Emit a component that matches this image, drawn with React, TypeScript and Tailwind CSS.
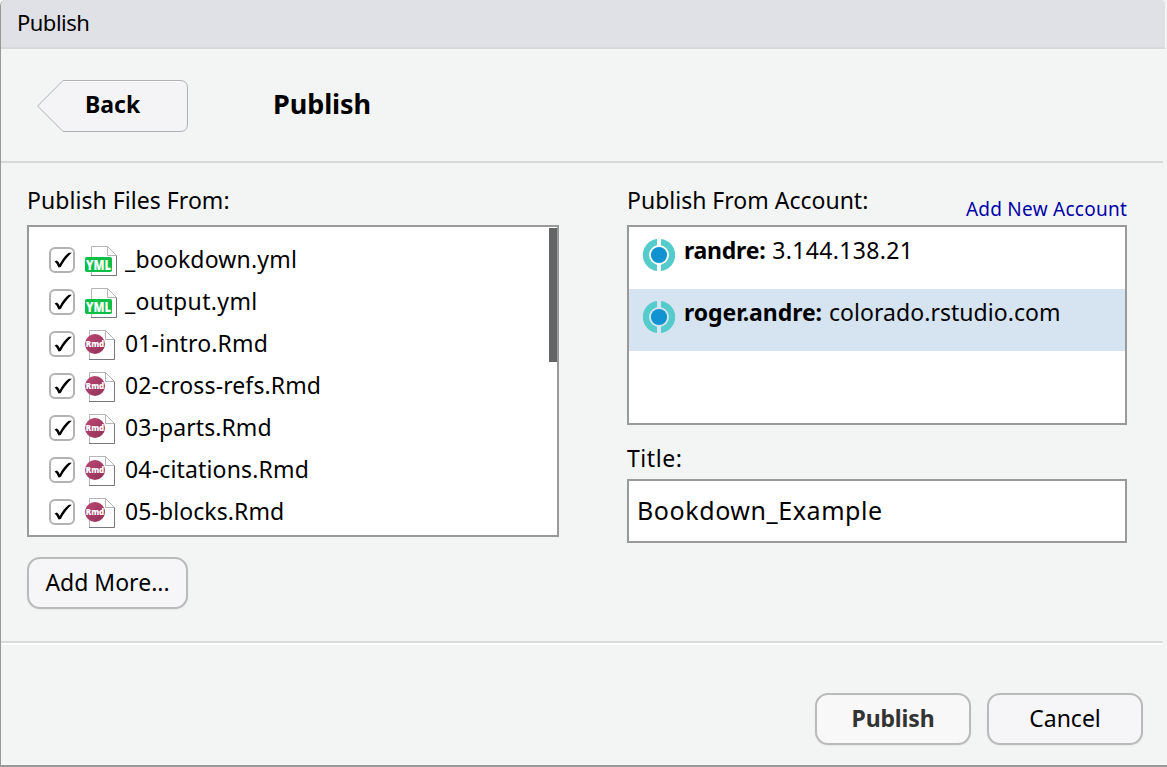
type FileKind = 'yml' | 'rmd';

const files: { name: string; kind: FileKind; tracking: string }[] = [
  { name: '_bookdown.yml', kind: 'yml', tracking: 'tracking-[0.18px]' },
  { name: '_output.yml', kind: 'yml', tracking: 'tracking-[0.36px]' },
  { name: '01-intro.Rmd', kind: 'rmd', tracking: 'tracking-[0.14px]' },
  { name: '02-cross-refs.Rmd', kind: 'rmd', tracking: 'tracking-[0.11px]' },
  { name: '03-parts.Rmd', kind: 'rmd', tracking: 'tracking-[0.08px]' },
  { name: '04-citations.Rmd', kind: 'rmd', tracking: 'tracking-[0.16px]' },
  { name: '05-blocks.Rmd', kind: 'rmd', tracking: 'tracking-[0.08px]' },
];

const accounts = [
  { user: 'randre:', host: '3.144.138.21', selected: false, tracking: 'tracking-[-0.25px]', hostTracking: 'tracking-[0.33px]' },
  { user: 'roger.andre:', host: 'colorado.rstudio.com', selected: true, tracking: 'tracking-[-0.07px]', hostTracking: 'tracking-[0.05px]' },
];

function Checkbox() {
  return (
    <span className="flex h-[26px] w-[26px] shrink-0 items-center justify-center rounded-[6px] border-2 border-[#b3b3b3] bg-white">
      <svg width="22" height="22" viewBox="0 0 22 22">
        <path
          d="M3.6 12.6 L5.8 11.5 C7.2 12.5 8 13.6 8.7 15.2 C11.2 10.2 14 6.6 17.8 3.8 L20.8 3.7 C16.2 7.8 12.6 12.6 9.8 18 L7.5 18.6 C6.5 16 5.3 14 3.6 12.6 Z"
          fill="#000"
        />
      </svg>
    </span>
  );
}

function YmlIcon() {
  return (
    <svg width="32" height="30" viewBox="0 0 32 30" className="shrink-0 overflow-visible">
      <path d="M6.5 0.5 H22.5 L31.5 9.5 V29.5 H6.5 Z" fill="#fff" stroke="#b5b5b8" />
      <path d="M31.5 9 V29.5 H6" fill="none" stroke="#77787c" />
      <path d="M22.5 0.5 V9.5 H31.5 Z" fill="#fff" stroke="#b5b5b8" strokeLinejoin="round" />
      <rect x="0" y="11" width="27" height="15" rx="1.8" fill="#0bbf47" />
      <text
        x="13.5"
        y="23.7"
        textAnchor="middle"
        textLength="25"
        lengthAdjust="spacingAndGlyphs"
        fontFamily="Open Sans, sans-serif"
        fontWeight="800"
        fontSize="14.5"
        fill="#fff"
      >
        YML
      </text>
    </svg>
  );
}

function RmdIcon() {
  return (
    <svg width="32" height="30" viewBox="0 0 32 30" className="shrink-0">
      <defs>
        <linearGradient id="rmd" x1="0" y1="0" x2="1" y2="1">
          <stop offset="0" stopColor="#bd4673" />
          <stop offset="1" stopColor="#8f3257" />
        </linearGradient>
      </defs>
      <path d="M4.5 0.5 H20.5 L29.5 9.5 V29.5 H4.5 Z" fill="#fff" stroke="#b5b5b8" />
      <path d="M29.5 9 V29.5 H4" fill="none" stroke="#77787c" />
      <path d="M20.5 0.5 V9.5 H29.5 Z" fill="#fff" stroke="#b5b5b8" strokeLinejoin="round" />
      <circle cx="10" cy="14" r="10" fill="url(#rmd)" />
      <text
        x="10"
        y="17"
        textAnchor="middle"
        textLength="18.5"
        lengthAdjust="spacingAndGlyphs"
        fontFamily="Open Sans, sans-serif"
        fontWeight="800"
        fontSize="9.5"
        fill="#fff"
      >
        Rmd
      </text>
    </svg>
  );
}

function ConnectIcon() {
  return (
    <svg width="32" height="32" viewBox="0 0 32 32" className="mt-3 shrink-0">
      <path d="M14 0.1 V6.2 A10 10 0 0 0 14 25.8 V31.9 A16 16 0 0 1 14 0.1 Z" fill="#53cccb" />
      <path d="M18 0.1 V6.2 A10 10 0 0 1 18 25.8 V31.9 A16 16 0 0 0 18 0.1 Z" fill="#53cccb" />
      <circle cx="16" cy="16" r="8.1" fill="#1093d0" />
    </svg>
  );
}

function BackButton() {
  return (
    <button className="relative flex h-[52px] w-[152px] items-center pb-1 pl-12">
      <svg width="152" height="53" viewBox="0 0 152 53" className="absolute left-0 top-0">
        <path d="M0.6 26 L26 0.5 H143 Q150.5 0.5 150.5 8 V44 Q150.5 51.5 143 51.5 H26 Z" fill="#f4f4f7" stroke="#b0b1b2" />
        <path d="M27 1.5 H143" stroke="#fff" fill="none" />
      </svg>
      <span className="relative text-[23px] leading-[30px] font-bold">Back</span>
    </button>
  );
}

const dialogButton =
  'flex h-[52px] items-center justify-center rounded-[13px] border-2 border-[#bababa] pb-[2px] text-[23px] leading-[30px] shadow-[0_1px_2px_rgba(0,0,0,0.05)]';

export default function App() {
  return (
    <div className="h-[767px] w-[1167px] overflow-hidden bg-[#f3f5f4] font-['Noto_Sans',sans-serif] text-black">
      <div className="flex h-full flex-col overflow-hidden rounded-tl-[6px] border-b-2 border-l border-[#999]">
        <header className="mr-[2px] flex h-[49px] shrink-0 items-center rounded-tr-[4px] border-b-2 border-[#d7d8db] bg-[#e0e1e6] pb-[3px] pl-4 text-[22px] leading-[30px] tracking-[-0.52px]">
          Publish
        </header>

        <div className="mr-1 flex h-[114px] shrink-0 items-start border-b-2 border-[#d7d9d9] pt-[31px] pl-9">
          <BackButton />
          <h1 className="ml-[84px] flex h-[52px] items-center pb-[4px] text-[27px] leading-[36px] font-bold tracking-[-0.08px]">
            Publish
          </h1>
        </div>

        <main className="mr-[3px] flex h-[478px] shrink-0 pl-[26px]">
          <section className="w-[532px]">
            <h2 className="h-[62px] pt-[22px] text-[23px] leading-[30px] tracking-[0.05px]">Publish Files From:</h2>
            <div className="flex h-[312px] justify-between border-2 border-[#999] bg-white">
              <ul className="pt-3 pl-5">
                {files.map((f) => (
                  <li key={f.name} className="flex h-[42px] items-center">
                    <Checkbox />
                    <span className="ml-[10px] mt-[2px]">{f.kind === 'yml' ? <YmlIcon /> : <RmdIcon />}</span>
                    <span className={`ml-[8px] pb-[2px] text-[23px] leading-[30px] ${f.tracking}`}>{f.name}</span>
                  </li>
                ))}
              </ul>
              <div className="mt-px h-[134px] w-2 bg-[#636466]" />
            </div>
            <button className={`${dialogButton} mt-5 w-[161px] bg-[#f6f6f9]`}>Add More...</button>
          </section>

          <section className="ml-[68px] w-[500px]">
            <div className="flex h-[62px] justify-between">
              <h2 className="pt-[22px] text-[23px] leading-[30px]">Publish From Account:</h2>
              <a className="pt-[31px] text-[19px] leading-[30px] tracking-[0.25px] text-[#0000a8]">Add New Account</a>
            </div>
            <ul className="h-[200px] border-2 border-[#999] bg-white">
              {accounts.map((a) => (
                <li key={a.user} className={`flex h-[62px] pl-[14px] ${a.selected ? 'bg-[#d6e4f1]' : ''}`}>
                  <ConnectIcon />
                  <span className={`ml-[9px] text-[23px] leading-[46px] font-bold ${a.tracking}`}>{a.user}</span>
                  <span className={`ml-[7px] text-[23px] leading-[46px] ${a.hostTracking}`}>{a.host}</span>
                </li>
              ))}
            </ul>
            <label className="block h-[54px] pt-[18px] text-[23px] leading-[30px] tracking-[0.55px]">Title:</label>
            <div className="flex h-[64px] items-center border-2 border-[#999] bg-white pb-[2px] pl-[8px] text-[25px] leading-[34px] tracking-[0.58px]">
              Bookdown_Example
            </div>
          </section>
        </main>

        <footer className="mr-1 flex grow justify-end gap-4 border-t-2 border-[#d9dada] pt-[50px] pr-5 shadow-[inset_0_2px_0_#fff]">
          <button className={`${dialogButton} w-[156px] bg-[#f8f8f8] font-bold tracking-[-0.14px] text-[#333]`}>Publish</button>
          <button className={`${dialogButton} w-[156px] bg-[#f6f6f9]`}>Cancel</button>
        </footer>
      </div>
    </div>
  );
}
